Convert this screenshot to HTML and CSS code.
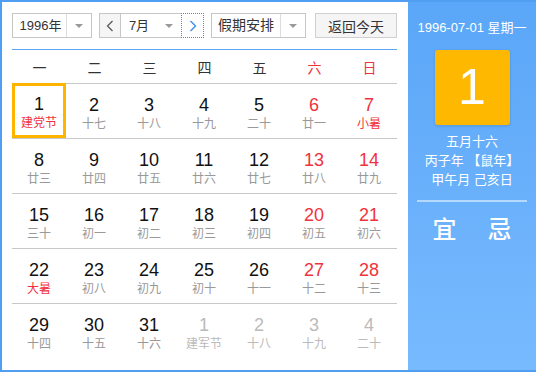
FILE: index.html
```html
<!DOCTYPE html>
<html lang="zh">
<head>
    <meta charset="UTF-8">
    <title>万年历</title>
    <link rel="stylesheet" href="styles.css">
</head>
<body>
    <div class="calendar">
        <div class="cal-main">
            <div class="toolbar">
                <div class="select year-select">
                    <span class="select-text">1996年</span>
                    <span class="select-arrow"></span>
                </div>
                <div class="month-group">
                    <span class="nav-btn prev">
                        <svg width="8" height="12" viewBox="0 0 8 12"><path d="M6.5 1 L1.5 6 L6.5 11" fill="none" stroke="#555" stroke-width="1.2"/></svg>
                    </span>
                    <div class="select month-select">
                        <span class="select-text">7月</span>
                        <span class="select-arrow"></span>
                    </div>
                    <span class="nav-btn next">
                        <svg width="8" height="12" viewBox="0 0 8 12"><path d="M1.5 1 L6.5 6 L1.5 11" fill="none" stroke="#3c8ff0" stroke-width="1.4"/></svg>
                    </span>
                </div>
                <div class="select holiday-select">
                    <span class="select-text">假期安排</span>
                    <span class="select-arrow"></span>
                </div>
                <button type="button" class="today-btn">返回今天</button>
            </div>

            <div class="week-head">
                <span>一</span><span>二</span><span>三</span><span>四</span><span>五</span>
                <span class="weekend">六</span><span class="weekend">日</span>
            </div>

            <div class="week">
                <div class="day selected"><b>1</b><i class="festival">建党节</i></div>
                <div class="day"><b>2</b><i>十七</i></div>
                <div class="day"><b>3</b><i>十八</i></div>
                <div class="day"><b>4</b><i>十九</i></div>
                <div class="day"><b>5</b><i>二十</i></div>
                <div class="day weekend"><b>6</b><i>廿一</i></div>
                <div class="day weekend"><b>7</b><i class="festival">小暑</i></div>
            </div>
            <div class="week">
                <div class="day"><b>8</b><i>廿三</i></div>
                <div class="day"><b>9</b><i>廿四</i></div>
                <div class="day"><b>10</b><i>廿五</i></div>
                <div class="day"><b>11</b><i>廿六</i></div>
                <div class="day"><b>12</b><i>廿七</i></div>
                <div class="day weekend"><b>13</b><i>廿八</i></div>
                <div class="day weekend"><b>14</b><i>廿九</i></div>
            </div>
            <div class="week">
                <div class="day"><b>15</b><i>三十</i></div>
                <div class="day"><b>16</b><i>初一</i></div>
                <div class="day"><b>17</b><i>初二</i></div>
                <div class="day"><b>18</b><i>初三</i></div>
                <div class="day"><b>19</b><i>初四</i></div>
                <div class="day weekend"><b>20</b><i>初五</i></div>
                <div class="day weekend"><b>21</b><i>初六</i></div>
            </div>
            <div class="week">
                <div class="day"><b>22</b><i class="festival">大暑</i></div>
                <div class="day"><b>23</b><i>初八</i></div>
                <div class="day"><b>24</b><i>初九</i></div>
                <div class="day"><b>25</b><i>初十</i></div>
                <div class="day"><b>26</b><i>十一</i></div>
                <div class="day weekend"><b>27</b><i>十二</i></div>
                <div class="day weekend"><b>28</b><i>十三</i></div>
            </div>
            <div class="week last">
                <div class="day"><b>29</b><i>十四</i></div>
                <div class="day"><b>30</b><i>十五</i></div>
                <div class="day"><b>31</b><i>十六</i></div>
                <div class="day other"><b>1</b><i>建军节</i></div>
                <div class="day other"><b>2</b><i>十八</i></div>
                <div class="day other"><b>3</b><i>十九</i></div>
                <div class="day other"><b>4</b><i>二十</i></div>
            </div>
        </div>

        <div class="cal-side">
            <div class="side-date">1996-07-01 星期一</div>
            <div class="side-day">1</div>
            <div class="side-lunar">
                <p>五月十六</p>
                <p>丙子年 【鼠年】</p>
                <p>甲午月 己亥日</p>
            </div>
            <div class="side-yiji">
                <span>宜</span>
                <span>忌</span>
            </div>
        </div>
    </div>
</body>
</html>
```

FILE: styles.css
```css
body {
    margin: 0;
    font-family: "Liberation Sans", "Noto Sans CJK SC", sans-serif;
    color: #333;
}
.calendar {
    display: flex;
    width: 536px;
    height: 372px;
    border: 2px solid #4f9ef1;
    border-right: none;
    box-sizing: border-box;
    background: #fff;
}
.cal-main {
    width: 406px;
    padding: 11px 11px 0 10px;
    box-sizing: border-box;
}
.toolbar {
    display: flex;
    height: 25px;
    font-size: 13px;
    padding-bottom: 11px;
    border-bottom: 1px solid #5aa6f5;
}
.select {
    display: flex;
    height: 25px;
    border: 1px solid #c6c6c6;
    box-sizing: border-box;
    background: #fff;
}
.select-text {
    flex: 1;
    line-height: 23px;
    text-align: center;
}
.select-arrow {
    width: 24px;
    border-left: 1px solid #ddd;
    position: relative;
}
.select-arrow::after {
    content: "";
    position: absolute;
    left: 8px;
    top: 10px;
    border: 4px solid transparent;
    border-top: 4px solid #999;
    border-bottom: none;
}
.year-select {
    width: 80px;
}
.year-select .select-text {
    padding-left: 2px;
}
.month-group {
    display: flex;
    margin-left: 7px;
}
.nav-btn {
    display: flex;
    align-items: center;
    justify-content: center;
    width: 22px;
    height: 25px;
    box-sizing: border-box;
    border: 1px solid #c6c6c6;
    background: #f5f5f5;
}
.nav-btn.next {
    width: 23px;
    background: #fff;
    border: 1px dotted #3c8ff0;
}
.month-select {
    width: 60px;
    border-left: none;
    border-right: none;
}
.month-select .select-arrow {
    border-left: none;
}
.holiday-select {
    width: 95px;
    margin-left: 7px;
}
.holiday-select .select-text {
    font-size: 14px;
}
.today-btn {
    width: 82px;
    height: 25px;
    margin-left: 9px;
    padding: 0;
    font-family: inherit;
    font-size: 14px;
    color: #333;
    background: #f5f5f5;
    border: 1px solid #d0d0d0;
}
.week-head {
    display: grid;
    grid-template-columns: repeat(7, 55px);
    height: 33px;
    line-height: 36px;
    text-align: center;
    font-size: 14px;
    border-bottom: 1px solid #c8c8c8;
}
.weekend {
    color: #f0323c;
}
.week {
    display: grid;
    grid-template-columns: repeat(7, 55px);
    height: 54px;
    border-bottom: 1px solid #c8c8c8;
}
.week.last {
    border-bottom: none;
}
.day {
    display: flex;
    flex-direction: column;
    align-items: center;
    padding-top: 11px;
    box-sizing: border-box;
    width: 54px;
}
.day b {
    font-weight: normal;
    font-size: 18px;
    line-height: 20px;
    color: #111;
}
.day i {
    font-style: normal;
    font-size: 12px;
    line-height: 18px;
    color: #999;
}
.day.weekend b {
    color: #f0323c;
}
.day i.festival {
    color: #f0323c;
}
.day.other b,
.day.other i {
    color: #bbb;
}
.day.selected {
    border: 3px solid #ffb400;
    padding-top: 8px;
    margin-top: -1px;
}
.cal-side {
    flex: 1;
    display: flex;
    flex-direction: column;
    align-items: center;
    color: #fff;
    background: linear-gradient(#5aa6f8, #78bafe);
}
.side-date {
    margin-top: 18px;
    font-size: 13px;
    line-height: 16px;
}
.side-day {
    width: 75px;
    height: 75px;
    margin-top: 14px;
    background: #ffb800;
    border-radius: 3px;
    box-shadow: 0 1px 3px rgba(0,0,0,0.15);
    font-size: 50px;
    line-height: 75px;
    text-align: center;
}
.side-lunar {
    margin-top: 7px;
    text-align: center;
    font-size: 13px;
    line-height: 19px;
    width: 110px;
    padding-bottom: 11px;
    border-bottom: 2px solid rgba(255,255,255,0.5);
}
.side-lunar p {
    margin: 0;
}
.side-yiji {
    display: flex;
    gap: 31px;
    margin-top: 14px;
    font-size: 24px;
    line-height: 28px;
    font-weight: 500;
}
```
